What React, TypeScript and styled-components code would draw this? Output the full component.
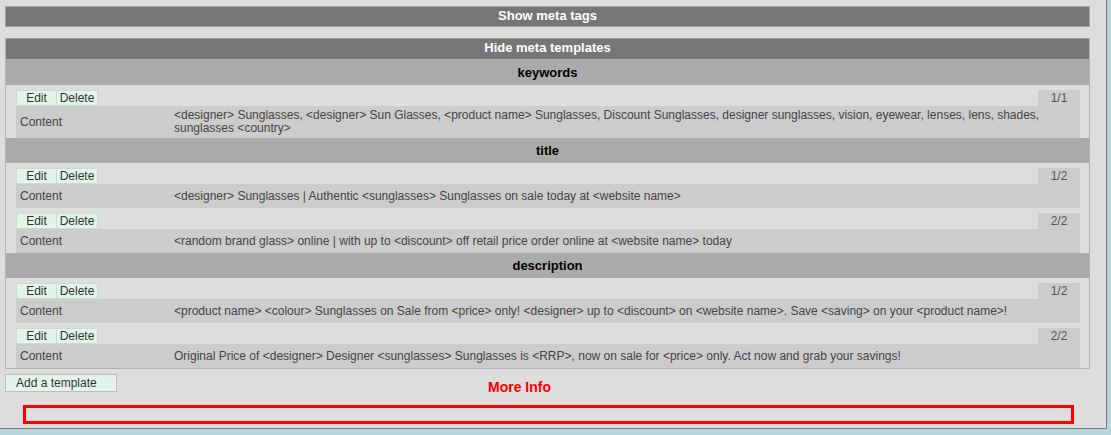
import React from "react";
import styled, { createGlobalStyle } from "styled-components";

const Global = createGlobalStyle`
  html, body { margin: 0; padding: 0; background: #b6d5dc; }
  body { font-family: "Liberation Sans", Arial, Helvetica, sans-serif; }
  * { box-sizing: border-box; }
`;

const Panel = styled.div`
  width: 1107px;
  height: 429px;
  background: #dddddd;
  border-right: 1px solid #7a7a7a;
  border-bottom: 1px solid #7a7a7a;
  padding: 6px 16px 0 5px;
  display: flex;
  flex-direction: column;
`;

const ToggleBar = styled.div<{ $boxed?: boolean }>`
  height: ${(p) => (p.$boxed ? "20px" : "21px")};
  background: #767676;
  border: ${(p) => (p.$boxed ? "none" : "1px solid #a2a2a2")};
  color: #ffffff;
  font-weight: bold;
  font-size: 13px;
  line-height: 18px;
  text-align: center;
  margin-bottom: ${(p) => (p.$boxed ? "0" : "11px")};
`;

const TemplatesBox = styled.div`
  border: 1px solid #b4b4b4;
  border-top-color: #9a9a9a;
`;

const SectionHeader = styled.div<{ $first?: boolean }>`
  height: ${(p) => (p.$first ? "26px" : "25px")};
  background: #aaaaaa;
  color: #000;
  font-weight: bold;
  font-size: 13px;
  line-height: ${(p) => (p.$first ? "27px" : "25px")};
  text-align: center;
`;

const Entries = styled.div`
  padding: 0 9px 0 10px;
`;

const Entry = styled.div`
  margin-top: 5px;
`;

const EntryBar = styled.div`
  display: flex;
  height: 16px;
`;

const SmallButton = styled.button<{ $first?: boolean }>`
  width: 41px;
  height: 16px;
  padding: 0;
  margin: 0;
  background: #e3f5e8;
  border: 1px solid #cbdccf;
  border-left-width: ${(p) => (p.$first ? "1px" : "0")};
  color: #333;
  font-family: inherit;
  font-size: 12px;
  line-height: 14px;
`;

const Counter = styled.div`
  margin-left: auto;
  width: 42px;
  height: 16px;
  background: #cccccc;
  color: #555;
  font-size: 12px;
  line-height: 16px;
  text-align: center;
`;

const ContentRow = styled.div`
  display: grid;
  grid-template-columns: 158px 1fr;
  align-items: center;
  min-height: 24px;
  padding: 3px 6px 3px 0;
  background: #cccccc;
  color: #444;
  font-size: 12px;
  line-height: 13px;
`;

const Label = styled.div`
  padding-left: 4px;
`;

const Footer = styled.div`
  display: flex;
  align-items: flex-start;
  margin-top: 5px;
`;

const AddButton = styled.button`
  width: 112px;
  height: 18px;
  margin: 0;
  padding: 0 0 0 10px;
  text-align: left;
  background: #e3f5e8;
  border: 1px solid #bdbdbd;
  color: #333;
  font-family: inherit;
  font-size: 12px;
  line-height: 16px;
`;

const MoreInfo = styled.div`
  margin-left: 371px;
  padding-top: 5px;
  color: #ff0000;
  font-weight: bold;
  font-size: 14px;
  line-height: 16px;
`;

const RedBox = styled.div`
  margin: 10px 16px 0 18px;
  height: 19px;
  border: 3px solid #ff0000;
`;

type Item = { text: string };
const sections: { name: string; items: Item[] }[] = [
  {
    name: "keywords",
    items: [
      {
        text:
          "<designer> Sunglasses, <designer> Sun Glasses, <product name> Sunglasses, Discount Sunglasses, designer sunglasses, vision, eyewear, lenses, lens, shades, sunglasses <country>",
      },
    ],
  },
  {
    name: "title",
    items: [
      { text: "<designer> Sunglasses | Authentic <sunglasses> Sunglasses on sale today at <website name>" },
      {
        text:
          "<random brand glass> online | with up to <discount> off retail price order online at <website name> today",
      },
    ],
  },
  {
    name: "description",
    items: [
      {
        text:
          "<product name> <colour> Sunglasses on Sale from <price> only! <designer> up to <discount> on <website name>. Save <saving> on your <product name>!",
      },
      {
        text:
          "Original Price of <designer> Designer <sunglasses> Sunglasses is <RRP>, now on sale for <price> only. Act now and grab your savings!",
      },
    ],
  },
];

export default function App() {
  return (
    <>
      <Global />
      <Panel>
        <ToggleBar>Show meta tags</ToggleBar>
        <TemplatesBox>
          <ToggleBar $boxed>Hide meta templates</ToggleBar>
          {sections.map((s, si) => (
            <div key={s.name}>
              <SectionHeader $first={si === 0}>{s.name}</SectionHeader>
              <Entries>
                {s.items.map((it, i) => (
                  <Entry key={i}>
                    <EntryBar>
                      <SmallButton $first>Edit</SmallButton>
                      <SmallButton>Delete</SmallButton>
                      <Counter>
                        {i + 1}/{s.items.length}
                      </Counter>
                    </EntryBar>
                    <ContentRow>
                      <Label>Content</Label>
                      <div>{it.text}</div>
                    </ContentRow>
                  </Entry>
                ))}
              </Entries>
            </div>
          ))}
        </TemplatesBox>
        <Footer>
          <AddButton>Add a template</AddButton>
          <MoreInfo>More Info</MoreInfo>
        </Footer>
        <RedBox />
      </Panel>
    </>
  );
}
